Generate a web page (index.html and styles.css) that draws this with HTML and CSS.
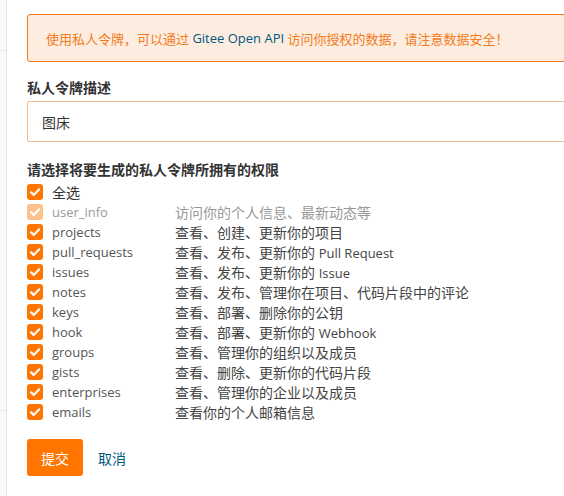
FILE: index.html
```html
<!DOCTYPE html>
<html lang="zh">
<head>
<meta charset="utf-8">
<link rel="stylesheet" href="styles.css">
</head>
<body>
<div class="layout">
  <aside class="sidebar">
    <div class="side-item top"></div>
    <div class="side-item mid"></div>
  </aside>
  <main class="main">
    <div class="alert">使用私人令牌，可以通过 <span class="link">Gitee Open API</span> 访问你授权的数据，请注意数据安全！</div>
    <div class="field-label">私人令牌描述</div>
    <div class="input">图床</div>
    <div class="field-label section">请选择将要生成的私人令牌所拥有的权限</div>
    <div class="perms">
      <div class="row"><span class="cb"><svg viewBox="0 0 16 16"><path d="M4 8.3l2.7 2.6L12 5.4" fill="none" stroke="#fff" stroke-width="2.2" stroke-linecap="round" stroke-linejoin="round"/></svg></span><span class="name all">全选</span></div>
      <div class="row disabled"><span class="cb"><svg viewBox="0 0 16 16"><path d="M4 8.3l2.7 2.6L12 5.4" fill="none" stroke="#fff" stroke-width="2.2" stroke-linecap="round" stroke-linejoin="round"/></svg></span><span class="name">user_info</span><span class="desc">访问你的个人信息、最新动态等</span></div>
      <div class="row"><span class="cb"><svg viewBox="0 0 16 16"><path d="M4 8.3l2.7 2.6L12 5.4" fill="none" stroke="#fff" stroke-width="2.2" stroke-linecap="round" stroke-linejoin="round"/></svg></span><span class="name">projects</span><span class="desc">查看、创建、更新你的项目</span></div>
      <div class="row"><span class="cb"><svg viewBox="0 0 16 16"><path d="M4 8.3l2.7 2.6L12 5.4" fill="none" stroke="#fff" stroke-width="2.2" stroke-linecap="round" stroke-linejoin="round"/></svg></span><span class="name">pull_requests</span><span class="desc">查看、发布、更新你的 <span class="en">Pull Request</span></span></div>
      <div class="row"><span class="cb"><svg viewBox="0 0 16 16"><path d="M4 8.3l2.7 2.6L12 5.4" fill="none" stroke="#fff" stroke-width="2.2" stroke-linecap="round" stroke-linejoin="round"/></svg></span><span class="name">issues</span><span class="desc">查看、发布、更新你的 <span class="en">Issue</span></span></div>
      <div class="row"><span class="cb"><svg viewBox="0 0 16 16"><path d="M4 8.3l2.7 2.6L12 5.4" fill="none" stroke="#fff" stroke-width="2.2" stroke-linecap="round" stroke-linejoin="round"/></svg></span><span class="name">notes</span><span class="desc">查看、发布、管理你在项目、代码片段中的评论</span></div>
      <div class="row"><span class="cb"><svg viewBox="0 0 16 16"><path d="M4 8.3l2.7 2.6L12 5.4" fill="none" stroke="#fff" stroke-width="2.2" stroke-linecap="round" stroke-linejoin="round"/></svg></span><span class="name">keys</span><span class="desc">查看、部署、删除你的公钥</span></div>
      <div class="row"><span class="cb"><svg viewBox="0 0 16 16"><path d="M4 8.3l2.7 2.6L12 5.4" fill="none" stroke="#fff" stroke-width="2.2" stroke-linecap="round" stroke-linejoin="round"/></svg></span><span class="name">hook</span><span class="desc">查看、部署、更新你的 <span class="en">Webhook</span></span></div>
      <div class="row"><span class="cb"><svg viewBox="0 0 16 16"><path d="M4 8.3l2.7 2.6L12 5.4" fill="none" stroke="#fff" stroke-width="2.2" stroke-linecap="round" stroke-linejoin="round"/></svg></span><span class="name">groups</span><span class="desc">查看、管理你的组织以及成员</span></div>
      <div class="row"><span class="cb"><svg viewBox="0 0 16 16"><path d="M4 8.3l2.7 2.6L12 5.4" fill="none" stroke="#fff" stroke-width="2.2" stroke-linecap="round" stroke-linejoin="round"/></svg></span><span class="name">gists</span><span class="desc">查看、删除、更新你的代码片段</span></div>
      <div class="row"><span class="cb"><svg viewBox="0 0 16 16"><path d="M4 8.3l2.7 2.6L12 5.4" fill="none" stroke="#fff" stroke-width="2.2" stroke-linecap="round" stroke-linejoin="round"/></svg></span><span class="name">enterprises</span><span class="desc">查看、管理你的企业以及成员</span></div>
      <div class="row"><span class="cb"><svg viewBox="0 0 16 16"><path d="M4 8.3l2.7 2.6L12 5.4" fill="none" stroke="#fff" stroke-width="2.2" stroke-linecap="round" stroke-linejoin="round"/></svg></span><span class="name">emails</span><span class="desc">查看你的个人邮箱信息</span></div>
    </div>
    <div class="actions">
      <button class="btn-submit">提交</button>
      <a class="btn-cancel">取消</a>
    </div>
  </main>
</div>
</body>
</html>
```
FILE: styles.css
```css
html, body {
  margin: 0;
  padding: 0;
  background: #fff;
  font-family: "Open Sans", "Noto Sans CJK SC", sans-serif;
  font-size: 13px;
  color: #333;
}
.layout {
  display: flex;
  width: 564px;
  height: 496px;
  overflow: hidden;
}
.sidebar {
  width: 6px;
  flex: 0 0 6px;
  background: #f9f9f9;
  border-right: 1px solid #e3e8ee;
}
.side-item {
  border-bottom: 1px solid #e6e6e6;
}
.side-item.top { height: 50px; }
.side-item.mid { height: 359px; }
.main {
  flex: 1;
  min-width: 0;
  padding: 14px 0 0 20px;
  overflow: hidden;
}
.alert {
  width: 600px;
  height: 48px;
  box-sizing: border-box;
  border: 1px solid #f37b1d;
  border-radius: 3px;
  background: #fdede0;
  color: #f37b1d;
  padding-left: 18px;
  display: flex;
  align-items: center;
  white-space: pre;
}
.alert .link { color: #005980; }
.field-label {
  font-size: 14px;
  font-weight: bold;
  line-height: 20px;
  margin-top: 16px;
  color: #333;
}
.field-label.section { margin-top: 18px; }
.input {
  margin-top: 3px;
  width: 600px;
  height: 41px;
  box-sizing: border-box;
  border: 1px solid #f6bb8a;
  border-radius: 2px;
  padding-left: 14px;
  display: flex;
  align-items: center;
  font-size: 14px;
  color: #333;
}
.perms {
  margin-top: 2px;
}
.row {
  display: flex;
  align-items: center;
  height: 20px;
}
.cb {
  width: 16px;
  height: 16px;
  border-radius: 3px;
  background: #ff7500;
  display: inline-flex;
  flex: 0 0 16px;
}
.cb svg { width: 16px; height: 16px; }
.row.disabled .cb { background: #ffc18c; }
.name {
  margin-left: 9px;
  width: 123px;
  color: #555;
}
.name.all { color: #333; font-size: 14px; }
.row.disabled .name, .row.disabled .desc { color: #999; }
.desc { color: #444; font-size: 14px; }
.desc .en { font-size: 13px; }
.actions {
  margin-top: 17px;
  display: flex;
  align-items: center;
}
.btn-submit {
  width: 56px;
  height: 37px;
  border: none;
  border-radius: 3px;
  background: #ff7500;
  color: #fff;
  font-family: inherit;
  font-size: 14px;
  padding: 0;
}
.btn-cancel {
  margin-left: 15px;
  font-size: 14px;
  color: #005980;
}
```
